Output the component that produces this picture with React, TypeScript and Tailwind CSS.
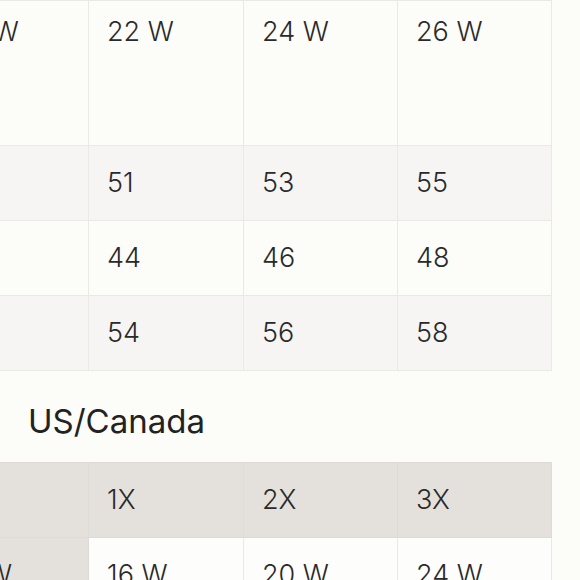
const rows1 = [
  ["49", "51", "53", "55"],
  ["42", "44", "46", "48"],
  ["52", "54", "56", "58"],
];

const widths = ["w-[155px]", "w-[155px]", "w-[154px]", "w-[154px]"];

export default function App() {
  return (
    <div
      className="min-h-[580px] w-[580px] overflow-hidden bg-[#fcfcf8] text-[#2a2a2a]"
      style={{ fontFamily: "Inter, Lato, sans-serif" }}
    >
      {/* first chart, scrolled sideways */}
      <div className="overflow-hidden">
        <table className="-ml-[67px] table-fixed border-collapse text-[27px] font-light">
          <colgroup>
            {widths.map((w, i) => (
              <col key={i} className={w} />
            ))}
          </colgroup>
          <thead>
            <tr className="h-[145px]">
              {["20 W", "22 W", "24 W", "26 W"].map((t) => (
                <th
                  key={t}
                  className="border border-[#e9e9e5] pl-[18px] pr-5 pt-[13px] text-left align-top font-light leading-[36px]"
                >
                  {t}
                </th>
              ))}
            </tr>
          </thead>
          <tbody>
            {rows1.map((r, i) => (
              <tr key={i} className={i % 2 === 0 ? "h-[75px] bg-[#f6f5f3]" : "h-[75px]"}>
                {r.map((c, j) => (
                  <td key={j} className="border border-[#e9e9e5] pl-[18px] pr-5 align-middle">
                    {j === 0 ? "" : c}
                  </td>
                ))}
              </tr>
            ))}
          </tbody>
        </table>
      </div>

      <h2 className="mt-[30px] pl-[28px] text-[33px] leading-[40px] font-normal text-[#222]">US/Canada</h2>

      {/* second chart */}
      <div className="mt-[21px] overflow-hidden">
        <table className="-ml-[67px] table-fixed border-collapse text-[27px] font-light">
          <colgroup>
            {widths.map((w, i) => (
              <col key={i} className={w} />
            ))}
          </colgroup>
          <thead>
            <tr className="h-[75px] bg-[#e4e1dc]">
              {["", "1X", "2X", "3X"].map((t, i) => (
                <th
                  key={i}
                  className="border border-[#dedbd6] pl-[18px] pr-5 text-left align-middle font-light"
                >
                  {t}
                </th>
              ))}
            </tr>
          </thead>
          <tbody>
            <tr className="h-[75px]">
              <td className="border border-[#dedbd6] bg-[#e4e1dc] pl-[28px] pr-5">8 W</td>
              <td className="border border-[#e9e9e5] bg-[#fdfdfb] pl-[18px] pr-5">16 W</td>
              <td className="border border-[#e9e9e5] bg-[#fdfdfb] pl-[18px] pr-5">20 W</td>
              <td className="border border-[#e9e9e5] bg-[#fdfdfb] pl-[18px] pr-5">24 W</td>
            </tr>
          </tbody>
        </table>
      </div>
    </div>
  );
}
